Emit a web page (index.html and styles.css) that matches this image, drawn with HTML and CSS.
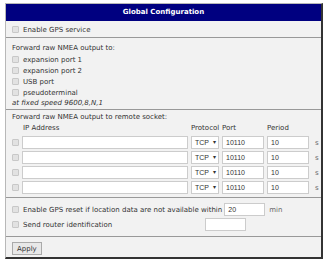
FILE: index.html
```html
<!DOCTYPE html>
<html lang="en">

<head>
  <meta charset="UTF-8">
  <title>Global Configuration</title>
  <link rel="stylesheet" href="styles.css">
</head>

<body>
  <div class="panel">
    <div class="title">Global Configuration</div>

    <div class="section service">
      <label class="check"><span class="box"></span>Enable GPS service</label>
    </div>

    <div class="section list">
      <div class="line">Forward raw NMEA output to:</div>
      <label class="check"><span class="box"></span>expansion port 1</label>
      <label class="check"><span class="box"></span>expansion port 2</label>
      <label class="check"><span class="box"></span>USB port</label>
      <label class="check"><span class="box"></span>pseudoterminal</label>
      <div class="line note">at fixed speed 9600,8,N,1</div>
    </div>

    <div class="section sockets">
      <div class="line">Forward raw NMEA output to remote socket:</div>
      <div class="grid">
        <span></span>
        <span class="head ip">IP Address</span>
        <span class="head">Protocol</span>
        <span class="head">Port</span>
        <span class="head">Period</span>
        <span></span>

        <span class="box"></span><span class="field"></span><span class="select">TCP<i>&#9662;</i></span><span class="field">10110</span><span class="field">10</span><span class="unit">s</span>
        <span class="box"></span><span class="field"></span><span class="select">TCP<i>&#9662;</i></span><span class="field">10110</span><span class="field">10</span><span class="unit">s</span>
        <span class="box"></span><span class="field"></span><span class="select">TCP<i>&#9662;</i></span><span class="field">10110</span><span class="field">10</span><span class="unit">s</span>
        <span class="box"></span><span class="field"></span><span class="select">TCP<i>&#9662;</i></span><span class="field">10110</span><span class="field">10</span><span class="unit">s</span>
      </div>
    </div>

    <div class="section extra">
      <div class="row">
        <label class="check"><span class="box"></span>Enable GPS reset if location data are not available within</label>
        <span class="field small">20</span>
        <span class="unit">min</span>
      </div>
      <div class="row">
        <label class="check"><span class="box"></span>Send router identification</label>
        <span class="field small ident"></span>
      </div>
    </div>

    <div class="section last">
      <button type="button" class="apply">Apply</button>
    </div>
  </div>
</body>

</html>
```

FILE: styles.css
```css
* {
  box-sizing: border-box;
}

body {
  margin: 0;
  background-color: #ffffff;
  font-family: "DejaVu Sans", Verdana, sans-serif;
  font-size: 7px;
  color: #333333;
}

.panel {
  width: 318px;
  margin: 3px 0 0 5px;
  background-color: #f2f2f2;
  border-left: 1px solid #b8b8b8;
  border-top: 1px solid #b8b8b8;
  border-right: 2px solid #333333;
  border-bottom: 2px solid #333333;
}

.title {
  height: 17px;
  line-height: 17px;
  background-color: #000080;
  color: #ffffff;
  font-weight: bold;
  text-align: center;
}

.section {
  border-bottom: 1px solid #999999;
  padding: 0 6px;
}

.service {
  padding-top: 3px;
  padding-bottom: 2px;
}

.check {
  display: flex;
  align-items: center;
  height: 11px;
}

.box {
  display: inline-block;
  width: 7px;
  height: 7px;
  margin-right: 4px;
  border: 1px solid #c8c8c8;
  background-color: #e2e2e2;
  border-radius: 1px;
}

.list {
  padding-top: 5px;
}

.line {
  height: 11px;
  line-height: 11px;
}

.note {
  font-style: italic;
}

.sockets {
  padding-top: 2px;
  padding-bottom: 3px;
  padding-right: 0;
}

.grid {
  display: grid;
  grid-template-columns: 7px 166px 28px 42px 42px 8px;
  column-gap: 3px;
  row-gap: 2px;
  align-items: center;
}

.head {
  height: 11px;
  line-height: 11px;
}

.head.ip {
  padding-left: 1px;
}

.grid .box {
  margin: 0;
}

.field {
  display: block;
  height: 13px;
  line-height: 11px;
  padding-left: 3px;
  background-color: #ffffff;
  border: 1px solid #cccccc;
  font-family: "Liberation Sans", Arial, sans-serif;
}

.select {
  display: flex;
  justify-content: space-between;
  height: 13px;
  line-height: 11px;
  padding: 0 2px 0 3px;
  background-color: #ffffff;
  border: 1px solid #cccccc;
  font-family: "Liberation Sans", Arial, sans-serif;
}

.select i {
  font-style: normal;
  font-size: 6px;
}

.unit {
  padding-left: 3px;
  color: #666666;
}

.extra {
  padding-top: 5px;
  padding-bottom: 5px;
}

.row {
  display: flex;
  align-items: center;
  height: 13px;
}

.row + .row {
  margin-top: 2px;
}

.field.small {
  width: 41px;
  margin-left: 2px;
}

.row .unit {
  padding-left: 4px;
}

.field.ident {
  margin-left: 93px;
}

.last {
  border-bottom: none;
  padding: 5px 6px 2px;
}

.apply {
  display: block;
  font-family: "DejaVu Sans", Verdana, sans-serif;
  font-size: 7px;
  color: #333333;
  height: 13px;
  padding: 0 4px;
  background-color: #e8e8e8;
  border: 1px solid #aaaaaa;
}
```
